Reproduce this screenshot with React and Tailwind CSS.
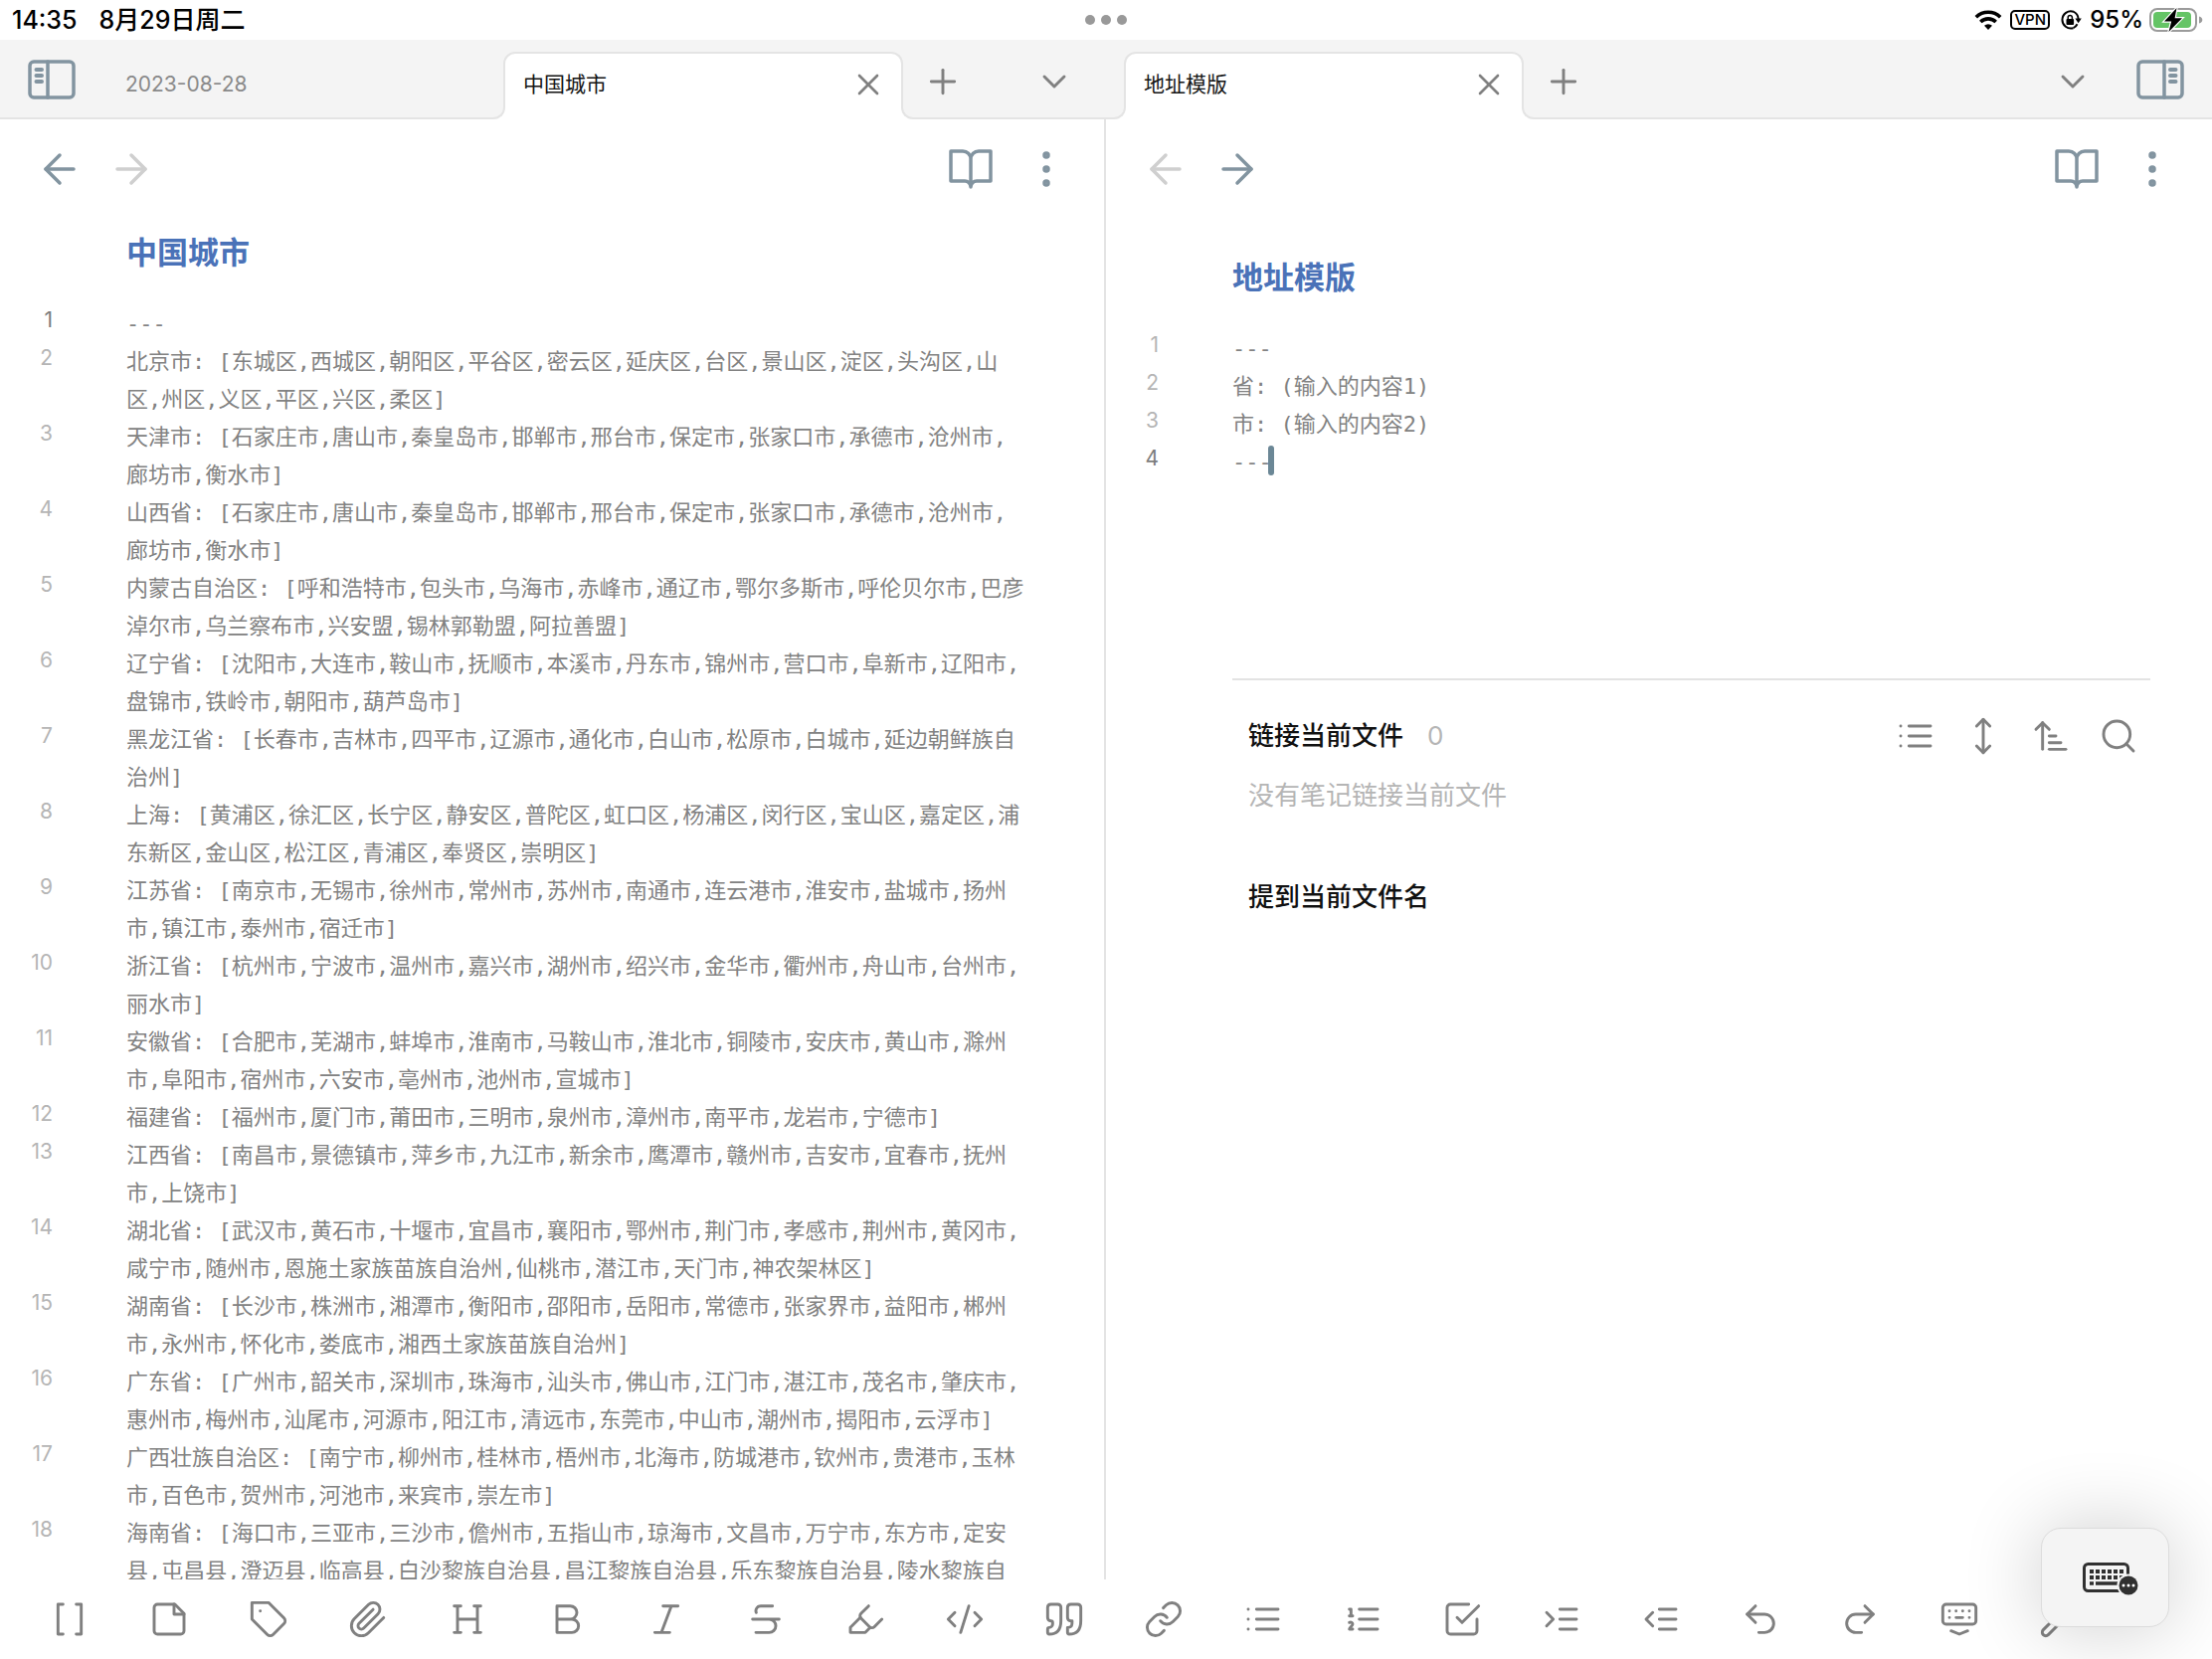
import React from "react";
import {
  ArrowLeft,
  ArrowRight,
  ArrowUpNarrowWide,
  ChevronDown,
  CodeXml,
  Link,
  MoveVertical,
  Plus,
  Redo2,
  Search,
  Undo2,
  Wrench,
  X,
} from "lucide-react";

const CITY_LINES = [
  "---",
  "北京市: [东城区,西城区,朝阳区,平谷区,密云区,延庆区,台区,景山区,淀区,头沟区,山区,州区,义区,平区,兴区,柔区]",
  "天津市: [石家庄市,唐山市,秦皇岛市,邯郸市,邢台市,保定市,张家口市,承德市,沧州市,廊坊市,衡水市]",
  "山西省: [石家庄市,唐山市,秦皇岛市,邯郸市,邢台市,保定市,张家口市,承德市,沧州市,廊坊市,衡水市]",
  "内蒙古自治区: [呼和浩特市,包头市,乌海市,赤峰市,通辽市,鄂尔多斯市,呼伦贝尔市,巴彦淖尔市,乌兰察布市,兴安盟,锡林郭勒盟,阿拉善盟]",
  "辽宁省: [沈阳市,大连市,鞍山市,抚顺市,本溪市,丹东市,锦州市,营口市,阜新市,辽阳市,盘锦市,铁岭市,朝阳市,葫芦岛市]",
  "黑龙江省: [长春市,吉林市,四平市,辽源市,通化市,白山市,松原市,白城市,延边朝鲜族自治州]",
  "上海: [黄浦区,徐汇区,长宁区,静安区,普陀区,虹口区,杨浦区,闵行区,宝山区,嘉定区,浦东新区,金山区,松江区,青浦区,奉贤区,崇明区]",
  "江苏省: [南京市,无锡市,徐州市,常州市,苏州市,南通市,连云港市,淮安市,盐城市,扬州市,镇江市,泰州市,宿迁市]",
  "浙江省: [杭州市,宁波市,温州市,嘉兴市,湖州市,绍兴市,金华市,衢州市,舟山市,台州市,丽水市]",
  "安徽省: [合肥市,芜湖市,蚌埠市,淮南市,马鞍山市,淮北市,铜陵市,安庆市,黄山市,滁州市,阜阳市,宿州市,六安市,亳州市,池州市,宣城市]",
  "福建省: [福州市,厦门市,莆田市,三明市,泉州市,漳州市,南平市,龙岩市,宁德市]",
  "江西省: [南昌市,景德镇市,萍乡市,九江市,新余市,鹰潭市,赣州市,吉安市,宜春市,抚州市,上饶市]",
  "湖北省: [武汉市,黄石市,十堰市,宜昌市,襄阳市,鄂州市,荆门市,孝感市,荆州市,黄冈市,咸宁市,随州市,恩施土家族苗族自治州,仙桃市,潜江市,天门市,神农架林区]",
  "湖南省: [长沙市,株洲市,湘潭市,衡阳市,邵阳市,岳阳市,常德市,张家界市,益阳市,郴州市,永州市,怀化市,娄底市,湘西土家族苗族自治州]",
  "广东省: [广州市,韶关市,深圳市,珠海市,汕头市,佛山市,江门市,湛江市,茂名市,肇庆市,惠州市,梅州市,汕尾市,河源市,阳江市,清远市,东莞市,中山市,潮州市,揭阳市,云浮市]",
  "广西壮族自治区: [南宁市,柳州市,桂林市,梧州市,北海市,防城港市,钦州市,贵港市,玉林市,百色市,贺州市,河池市,来宾市,崇左市]",
  "海南省: [海口市,三亚市,三沙市,儋州市,五指山市,琼海市,文昌市,万宁市,东方市,定安县,屯昌县,澄迈县,临高县,白沙黎族自治县,昌江黎族自治县,乐东黎族自治县,陵水黎族自治县]",
];

const TEMPLATE_LINES = ["---", "省: (输入的内容1)", "市: (输入的内容2)", "---"];

function Glyph({ children }) {
  return (
    <svg
      viewBox="0 0 24 24"
      className="size-10"
      fill="none"
      stroke="currentColor"
      strokeWidth="1.75"
      strokeLinecap="round"
      strokeLinejoin="round"
      aria-hidden="true"
    >
      {children}
    </svg>
  );
}

const lucide = { className: "size-10", strokeWidth: 1.75 };

const FORMAT_TOOLS = [
  ["内部链接", <Glyph><path d="M16 3h3v18h-3M8 21H5V3h3" /></Glyph>],
  ["嵌入", <Glyph><path d="M15.5 3H5a2 2 0 0 0-2 2v14a2 2 0 0 0 2 2h14a2 2 0 0 0 2-2V8.5L15.5 3Z" /><path d="M15 3v6h6" /></Glyph>],
  ["标签", <Glyph><path d="M12 2H2v10l9.29 9.29c.94.94 2.48.94 3.42 0l6.58-6.58c.94-.94.94-2.48 0-3.42L12 2Z" /><path d="M7 7h.01" /></Glyph>],
  ["附件", <Glyph><path d="m21.44 11.05-9.19 9.19a6 6 0 0 1-8.49-8.49l8.57-8.57A4 4 0 1 1 18 8.84l-8.59 8.57a2 2 0 0 1-2.83-2.83l8.49-8.48" /></Glyph>],
  ["标题", <Glyph><path d="M6 4v16M18 4v16M6 12h12M4 4h4M16 4h4M4 20h4M16 20h4" /></Glyph>],
  ["粗体", <Glyph><path d="M14 12a4 4 0 0 0 0-8H6v8M15 20a4 4 0 0 0 0-8H6v8Z" /></Glyph>],
  ["斜体", <Glyph><path d="M19 4h-9M14 20H5M15 4 9 20" /></Glyph>],
  ["删除线", <Glyph><path d="M16 4H9a3 3 0 0 0-2.83 4M14 12a4 4 0 0 1 0 8H6M4 12h16" /></Glyph>],
  ["高亮", <Glyph><path d="m9 11-6 6v3h9l3-3" /><path d="m22 12-4.6 4.6a2 2 0 0 1-2.8 0l-5.2-5.2a2 2 0 0 1 0-2.8L14 4" /></Glyph>],
  ["代码", <CodeXml {...lucide} />],
  ["引用", <Glyph><path d="M3 21c3 0 7-1 7-8V5c0-1.25-.756-2.017-2-2H4c-1.25 0-2 .75-2 1.972V11c0 1.25.75 2 2 2 1 0 1 0 1 1v1c0 1-1 2-2 2s-1 .008-1 1.031V20c0 1 0 1 1 1z" /><path d="M15 21c3 0 7-1 7-8V5c0-1.25-.757-2.017-2-2h-4c-1.25 0-2 .75-2 1.972V11c0 1.25.75 2 2 2h.75c0 2.25.25 4-2.75 4v3c0 1 0 1 1 1z" /></Glyph>],
  ["链接", <Link {...lucide} />],
  ["无序列表", <Glyph><path d="M8 6h13M8 12h13M8 18h13M3 6h.01M3 12h.01M3 18h.01" /></Glyph>],
  ["有序列表", <Glyph><path d="M10 6h11M10 12h11M10 18h11M4 6h1v4M4 10h2M6 18H4c0-1 2-2 2-3s-1-1.5-2-1" /></Glyph>],
  ["任务列表", <Glyph><path d="m9 11 3 3L22 4" /><path d="M21 12v7a2 2 0 0 1-2 2H5a2 2 0 0 1-2-2V5a2 2 0 0 1 2-2h11" /></Glyph>],
  ["增加缩进", <Glyph><path d="m3 8 4 4-4 4M21 12H11M21 6H11M21 18H11" /></Glyph>],
  ["减少缩进", <Glyph><path d="m7 8-4 4 4 4M21 12H11M21 6H11M21 18H11" /></Glyph>],
  ["撤销", <Undo2 {...lucide} />],
  ["重做", <Redo2 {...lucide} />],
  ["收起键盘", <Glyph><rect x="2" y="3" width="20" height="12" rx="2" /><path d="M6 7h.01M10 7h.01M14 7h.01M18 7h.01M6 11h.01M18 11h.01M10 11h4M7 19l5 2 5-2" /></Glyph>],
  ["设置工具栏", <Wrench {...lucide} />],
];

function SidebarIcon({ flipped }) {
  return (
    <svg
      viewBox="0 0 48 40"
      className={flipped ? "h-10 w-12 -scale-x-100" : "h-10 w-12"}
      fill="none"
      stroke="currentColor"
      strokeLinecap="round"
      aria-hidden="true"
    >
      <rect x="2" y="2" width="44" height="36" rx="4" strokeWidth="3.500" />
      <path d="M20 2v36" strokeWidth="3.500" />
      <path d="M8.500 10h5.500M8.500 16h5.500M8.500 22h5.500" strokeWidth="4" />
    </svg>
  );
}

function IconButton({ label, className = "", children }) {
  return (
    <button type="button" aria-label={label} className={`shrink-0 ${className}`}>
      {children}
    </button>
  );
}

function StatusBar() {
  return (
    <div className="relative flex h-10 shrink-0 items-center justify-between bg-white pr-[9px] pl-3 leading-10 font-medium text-black">
      <div className="flex gap-[22px] text-[25px]">
        <span>14:35</span>
        <span>8月29日周二</span>
      </div>
      <div className="absolute inset-x-0 flex justify-center gap-1.5">
        <span className="size-2.5 rounded-full bg-[#999999]" />
        <span className="size-2.5 rounded-full bg-[#999999]" />
        <span className="size-2.5 rounded-full bg-[#999999]" />
      </div>
      <div className="flex items-center text-2xl leading-10">
        <svg viewBox="0 0 28 20" className="mr-2 h-5 w-7" fill="none" stroke="#000" aria-label="Wi-Fi">
          <path d="M1.800 7.200a17.500 17.500 0 0 1 24.400 0" strokeWidth="3.600" />
          <path d="M6.300 12a11 11 0 0 1 15.400 0" strokeWidth="3.600" />
          <path d="M14 20l-4-4.200a5.800 5.800 0 0 1 8 0z" fill="#000" stroke="none" />
        </svg>
        <span className="mr-2.5 flex h-5 w-10 items-center justify-center rounded-[5px] border-2 border-black text-[15px] leading-4">
          VPN
        </span>
        <svg viewBox="0 0 22 20" className="mr-2 h-5 w-[22px]" fill="none" stroke="#000" aria-label="方向锁定">
          <path d="M13.800 1.800A8.600 8.600 0 1 0 13.500 18.200" strokeWidth="2" />
          <path d="M13.500 1.700A8.600 8.600 0 0 1 18.600 9M13.500 18.200a8.600 8.600 0 0 0 4-4" strokeWidth="2" />
          <path d="M15.400 8.600h6.400l-3.200 4.600z" fill="#000" stroke="none" />
          <rect x="6.500" y="9" width="7.600" height="6" rx="1" fill="#000" stroke="none" />
          <path d="M8.200 9.500V7.600a2.100 2.100 0 0 1 4.200 0v1.900" strokeWidth="1.500" />
        </svg>
        <span className="mr-1.5">95%</span>
        <svg viewBox="0 0 54 26" className="h-[26px] w-[54px]" aria-label="正在充电">
          <rect x="1" y="2" width="46" height="22" rx="7" fill="none" stroke="#9b9b9b" strokeWidth="2" />
          <rect x="4" y="5" width="38" height="16" rx="4" fill="#65c466" />
          <path d="M50 9.500c2 .5 3.300 1.900 3.300 3.500s-1.300 3-3.300 3.500z" fill="#9b9b9b" />
          <path d="M27.500 1 15 14.500h7.200L19.500 25 33 11.300h-7.400z" fill="#000" stroke="#fff" strokeWidth="2.400" paintOrder="stroke" />
        </svg>
      </div>
    </div>
  );
}

function ActiveTab({ title }) {
  return (
    <div className="relative mt-3 -mb-0.5 flex w-[402px] items-center justify-between rounded-t-xl border-2 border-b-0 border-[#e4e4e4] bg-white pr-[15px] pb-1 pl-[18px]">
      <span className="absolute bottom-0 -left-3 size-3 bg-white">
        <span className="block size-full rounded-br-xl border-r-2 border-b-2 border-[#e4e4e4] bg-[#f4f4f4]" />
      </span>
      <span className="absolute -right-3 bottom-0 size-3 bg-white">
        <span className="block size-full rounded-bl-xl border-b-2 border-l-2 border-[#e4e4e4] bg-[#f4f4f4]" />
      </span>
      <span className="text-[21px] leading-8 text-[#151515]">{title}</span>
      <IconButton label="关闭标签页" className="text-[#808080]">
        <X className="size-9" strokeWidth={1.75} />
      </IconButton>
    </div>
  );
}

function TabActions({ last }) {
  return (
    <div className={last ? "ml-5 flex flex-1 items-center justify-between pt-1.5 text-[#808080]" : "ml-5 mr-8 flex flex-1 items-center justify-between pt-1.5 text-[#808080]"}>
      <IconButton label="新标签页">
        <Plus className="size-10" strokeWidth={1.75} />
      </IconButton>
      <IconButton label="标签页列表">
        <ChevronDown className="size-10" strokeWidth={1.75} />
      </IconButton>
    </div>
  );
}

function ViewHeader({ canGoBack, canGoForward }) {
  return (
    <div className="flex h-[100px] shrink-0 items-center px-9 text-[#8294a0]">
      <IconButton label="后退" className={canGoBack ? "mr-6" : "mr-6 text-[#cfcfcf]"}>
        <ArrowLeft className="size-12" strokeWidth={1.75} />
      </IconButton>
      <IconButton label="前进" className={canGoForward ? "mr-auto" : "mr-auto text-[#cfcfcf]"}>
        <ArrowRight className="size-12" strokeWidth={1.75} />
      </IconButton>
      <IconButton label="阅读视图" className="mr-7">
        <svg viewBox="0 0 24 24" className="size-12" fill="none" stroke="currentColor" strokeWidth="1.75" strokeLinecap="round" strokeLinejoin="round" aria-hidden="true">
          <path d="M2 3h6a4 4 0 0 1 4 4v14a3 3 0 0 0-3-3H2zM22 3h-6a4 4 0 0 0-4 4v14a3 3 0 0 1 3-3h7z" />
        </svg>
      </IconButton>
      <IconButton label="更多选项">
        <svg viewBox="0 0 24 24" className="size-12" fill="none" stroke="currentColor" strokeWidth="1.75" aria-hidden="true">
          <circle cx="12" cy="5" r="1" />
          <circle cx="12" cy="12" r="1" />
          <circle cx="12" cy="19" r="1" />
        </svg>
      </IconButton>
    </div>
  );
}

function Editor({ lines, activeLine, caret }) {
  return (
    <ol className="mt-[31px]">
      {lines.map((line, i) => (
        <li key={i} className="flex pr-20">
          <span
            className={
              i + 1 === activeLine
                ? "-mt-1 w-[53px] shrink-0 text-right text-[21px] leading-[38px] text-[#7d7d7d]"
                : "-mt-1 w-[53px] shrink-0 text-right text-[21px] leading-[38px] text-[#b5b5b5]"
            }
          >
            {i + 1}
          </span>
          <p className="ml-[74px] font-['DejaVu_Sans_Mono','Noto_Sans_CJK_SC',monospace] text-[22px] leading-[38px] text-[#828282]">
            {line}
            {caret && i + 1 === activeLine && (
              <span className="-ml-1 inline-block h-[30px] w-1.5 rounded-full bg-[#6b8796] align-[-6px]" />
            )}
          </p>
        </li>
      ))}
    </ol>
  );
}

function NoteTitle({ children }) {
  return <h1 className="pl-[127px] text-[31px] leading-[44px] font-bold text-[#4a72b8]">{children}</h1>;
}

function Backlinks() {
  return (
    <section className="mt-[198px] mr-[62px] ml-[127px] border-t-2 border-[#e3e3e3] pt-9 pr-3 pl-4 text-[26px] leading-10">
      <div className="flex h-10 items-center">
        <h2 className="font-medium text-[#111111]">链接当前文件</h2>
        <span className="ml-6 text-[#b5b5b5]">0</span>
        <div className="ml-auto flex gap-7 text-[#808080]">
          <IconButton label="折叠结果">
            <Glyph><path d="M8 6h13M8 12h13M8 18h13M3 6h.01M3 12h.01M3 18h.01" /></Glyph>
          </IconButton>
          <IconButton label="显示更多上下文">
            <MoveVertical {...lucide} />
          </IconButton>
          <IconButton label="更改排序">
            <ArrowUpNarrowWide {...lucide} />
          </IconButton>
          <IconButton label="搜索">
            <Search {...lucide} />
          </IconButton>
        </div>
      </div>
      <p className="mt-5 text-[#b5b5b5]">没有笔记链接当前文件</p>
      <h2 className="mt-[62px] font-medium text-[#111111]">提到当前文件名</h2>
    </section>
  );
}

function KeyboardShortcut() {
  return (
    <button
      type="button"
      aria-label="键盘选项"
      className="absolute right-[43px] bottom-8 flex h-[100px] w-[129px] items-center justify-center rounded-[20px] border border-[#dcdcdc] bg-[#f4f4f4] pt-0.5 pl-2.5 shadow-[0_0_80px_rgba(0,0,0,0.2)]"
    >
      <svg viewBox="0 0 56 34" className="h-[34px] w-14" aria-hidden="true">
        <rect x="1.500" y="2.500" width="44" height="27" rx="4" fill="none" stroke="#303030" strokeWidth="3" />
        <path d="M7 10h36M7 16h33" stroke="#303030" strokeWidth="4" strokeDasharray="4 2" />
        <path d="M7 22h4M13 22h24" stroke="#303030" strokeWidth="3.500" />
        <circle cx="46" cy="24" r="11.500" fill="#f4f4f4" />
        <circle cx="46" cy="24" r="9.500" fill="#303030" />
        <g fill="#fff">
          <circle cx="41" cy="24" r="1.500" />
          <circle cx="46" cy="24" r="1.500" />
          <circle cx="51" cy="24" r="1.500" />
        </g>
      </svg>
    </button>
  );
}

export default function App() {
  return (
    <div className="relative flex h-screen flex-col overflow-hidden bg-white font-['Inter','Noto_Sans_CJK_SC',sans-serif]" lang="zh-CN">
      <StatusBar />
      <header className="grid h-20 shrink-0 grid-cols-2 border-b-2 border-[#e4e4e4] bg-[#f4f4f4]">
        <div className="flex min-w-0">
          <IconButton label="左侧边栏" className="mr-[30px] ml-7 pt-0.5 text-[#8294a0]">
            <SidebarIcon />
          </IconButton>
          <button type="button" className="w-[400px] pt-3 pl-5 text-left text-[21px] leading-8 text-[#8a8a8a]">
            2023-08-28
          </button>
          <ActiveTab title="中国城市" />
          <TabActions />
        </div>
        <div className="flex min-w-0 pl-[18px]">
          <ActiveTab title="地址模版" />
          <TabActions last />
          <IconButton label="右侧边栏" className="mr-7 ml-11 pt-0.5 text-[#8294a0]">
            <SidebarIcon flipped />
          </IconButton>
        </div>
      </header>
      <main className="grid min-h-0 flex-1 grid-cols-2 grid-rows-1">
        <section className="flex min-h-0 flex-col overflow-hidden shadow-[inset_-2px_0_0_#e4e4e4]">
          <ViewHeader canGoBack />
          <div className="min-h-0 flex-1 overflow-hidden pt-3">
            <NoteTitle>中国城市</NoteTitle>
            <Editor lines={CITY_LINES} activeLine={1} />
          </div>
        </section>
        <section className="flex min-h-0 flex-col overflow-hidden">
          <ViewHeader canGoForward />
          <div className="min-h-0 flex-1 overflow-hidden pt-[37px]">
            <NoteTitle>地址模版</NoteTitle>
            <Editor lines={TEMPLATE_LINES} activeLine={4} caret />
            <Backlinks />
          </div>
        </section>
      </main>
      <footer className="flex h-20 shrink-0 items-center pl-5 text-[#808080]">
        {FORMAT_TOOLS.map(([label, icon]) => (
          <IconButton key={label} label={label} className="flex w-[100px] justify-center">
            {icon}
          </IconButton>
        ))}
      </footer>
      <KeyboardShortcut />
    </div>
  );
}
